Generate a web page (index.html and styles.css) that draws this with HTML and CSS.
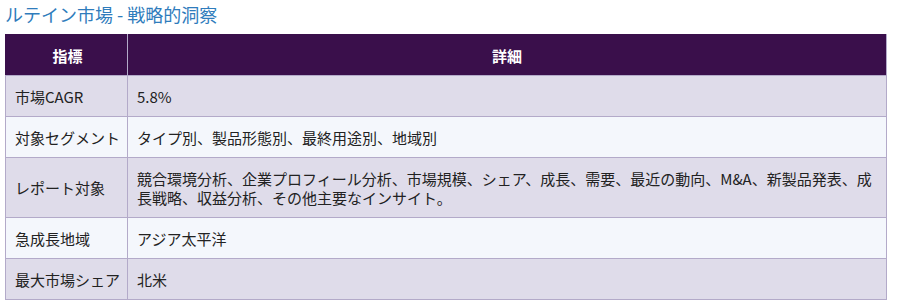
FILE: index.html
```html
<!DOCTYPE html>
<html lang="ja">
<head>
<meta charset="utf-8">
<title>ルテイン市場 - 戦略的洞察</title>
<link rel="stylesheet" href="styles.css">
</head>
<body>
<div class="wrap">
  <h2 class="title">ルテイン市場 - 戦略的洞察</h2>
  <table class="insights">
    <thead>
      <tr><th class="c1">指標</th><th>詳細</th></tr>
    </thead>
    <tbody>
      <tr><td class="c1">市場CAGR</td><td>5.8%</td></tr>
      <tr><td class="c1">対象セグメント</td><td>タイプ別、製品形態別、最終用途別、地域別</td></tr>
      <tr><td class="c1">レポート対象</td><td>競合環境分析、企業プロフィール分析、市場規模、シェア、成長、需要、最近の動向、M&amp;A、新製品発表、成長戦略、収益分析、その他主要なインサイト。</td></tr>
      <tr><td class="c1">急成長地域</td><td>アジア太平洋</td></tr>
      <tr><td class="c1">最大市場シェア</td><td>北米</td></tr>
    </tbody>
  </table>
</div>
</body>
</html>
```
FILE: styles.css
```css
html, body {
  margin: 0;
  padding: 0;
  background: #ffffff;
}
body {
  font-family: "Noto Sans CJK JP", "Noto Sans", sans-serif;
  color: #222222;
}
.wrap {
  padding: 0 14px 0 5px;
}
.title {
  margin: 0;
  padding-top: 1px;
  font-size: 18px;
  line-height: 26px;
  font-weight: 400;
  color: #2f7cbc;
  margin-bottom: 7px;
}
.insights {
  width: 882px;
  border-collapse: collapse;
  font-size: 15px;
  line-height: 19px;
}
.insights th,
.insights td {
  border: 1px solid #b3aac9;
  padding: 10.5px 9px;
  text-align: left;
  vertical-align: middle;
}
.insights th {
  background: #3a0f4b;
  color: #ffffff;
  font-weight: 700;
  text-align: center;
  border-color: #3a0f4b #b3aac9 #b3aac9 #3a0f4b;
}
.insights .c1 {
  width: 103px;
  padding-right: 7px;
  white-space: nowrap;
}
.insights tbody tr:nth-child(odd) td {
  background: #dfdcea;
}
.insights tbody tr:nth-child(even) td {
  background: #f4f7fc;
}
```
